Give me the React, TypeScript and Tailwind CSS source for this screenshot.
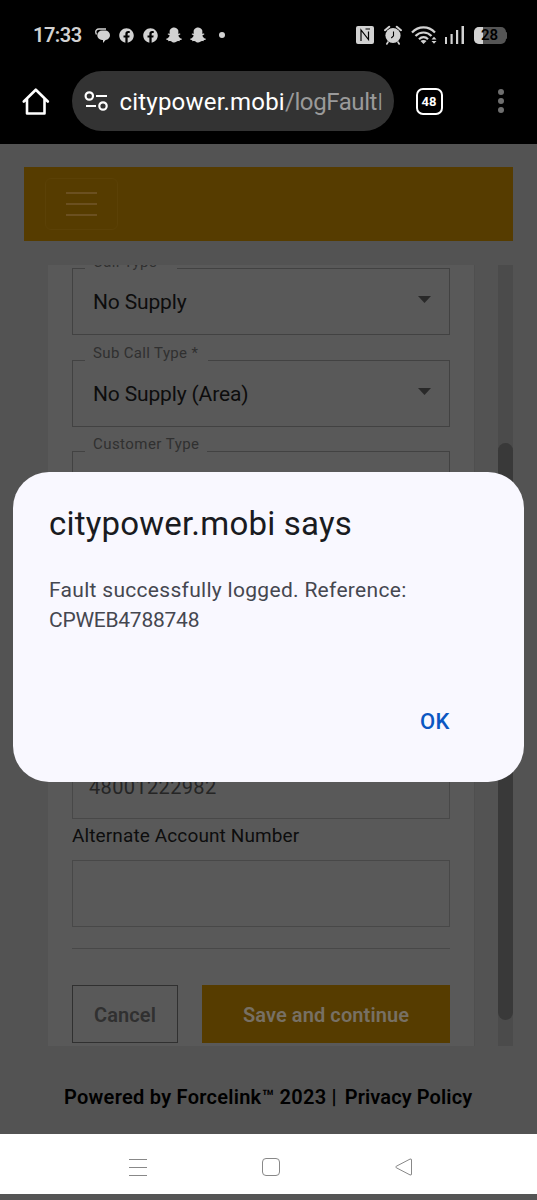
import { FaFacebook, FaSnapchatGhost } from "react-icons/fa";

function StatusBar() {
  return (
    <div className="flex h-[70px] items-center justify-between pl-[33px] pr-[30px] text-[#d2d2d2]">
      <div className="flex items-center">
        <span className="w-[62px] whitespace-nowrap text-[20px] font-semibold leading-none tracking-[-0.5px]">17:33</span>
        <svg className="mt-px h-4 w-4" viewBox="0 0 16 16" fill="currentColor">
          <path d="M7 2.500h3a4.700 4.700 0 0 1 .6 9.400L8 15v-3H7A4.750 4.750 0 0 1 7 2.500z" />
          <path d="M1.500 6.500Q0 3.500 1.500 2 2.300 1 4 1h7" fill="none" stroke="currentColor" strokeWidth="1.400" />
        </svg>
        <FaFacebook className="ml-2 h-[15px] w-[15px]" />
        <FaFacebook className="ml-[9px] h-[15px] w-[15px]" />
        <FaSnapchatGhost className="ml-2 h-4 w-4" />
        <FaSnapchatGhost className="ml-2 h-4 w-4" />
        <span className="ml-[13px] h-1.5 w-1.5 rounded-full bg-current" />
      </div>

      <div className="flex items-center">
        <svg className="h-[18px] w-[18px]" viewBox="0 0 18 18">
          <rect width="18" height="18" rx="2" fill="currentColor" />
          <path d="M5 15V4L12.500 13.500V5.500M9.500 3h4.500" fill="none" stroke="#000" strokeWidth="1.200" />
        </svg>
        <svg className="ml-2.5 h-5 w-[18px]" viewBox="0 0 18 20">
          <circle cx="9" cy="10.500" r="7.600" fill="currentColor" />
          <path d="M1 5.200L5.200 1.700M17 5.200L12.800 1.700" stroke="currentColor" strokeWidth="2" strokeLinecap="round" />
          <path d="M4 17L2.800 19M14 17l1.200 2" stroke="currentColor" strokeWidth="1.600" strokeLinecap="round" />
          <path d="M9.500 6.500v4.300L7.300 13" fill="none" stroke="#000" strokeWidth="1.100" />
        </svg>
        <svg className="ml-[9px] h-5 w-[27px]" viewBox="0 0 27 20" fill="none" stroke="currentColor" strokeWidth="2.200">
          <path d="M1 7.500C7.500.700 17.500.700 24 7.500" />
          <path d="M4.500 11c4.500-4.700 11.500-4.700 16 0" />
          <path d="M8 14.200c2.800-2.700 6.400-2.700 9 0" />
          <path d="M9.500 16L12.500 19l3-3c-1.500-1.500-4.500-1.500-6 0z" fill="currentColor" stroke="none" />
          <path d="M20.500 14.500L23 11.800l2.500 2.700zM20.500 16L23 18.800l2.500-2.800z" fill="currentColor" stroke="none" />
        </svg>
        <svg className="ml-[7px] h-[18px] w-[19px]" viewBox="0 0 19 18" fill="currentColor">
          <rect y="11" width="2" height="7" />
          <rect x="5.500" y="8" width="2.200" height="10" />
          <rect x="11" y="4" width="2.200" height="14" />
          <rect x="16.500" width="2.500" height="18" />
        </svg>
        <div className="relative ml-2.5 flex h-[17px] w-8 items-center justify-center overflow-hidden rounded-[5px] bg-[#555]">
          <span className="absolute inset-y-0 left-0 w-[9px] bg-[#d2d2d2]" />
          <span className="relative text-[15px] font-semibold leading-none text-black">28</span>
        </div>
        <span className="h-[7px] w-[1.5px] rounded-r bg-[#555]" />
      </div>
    </div>
  );
}

function AddressBar() {
  return (
    <div className="flex h-[74px] items-start pl-[22px] pt-[1px] text-white">
      <svg className="mt-[17px] h-[28px] w-[28px]" viewBox="0 0 28 28" fill="none" stroke="currentColor" strokeWidth="2.600" strokeLinejoin="round" strokeLinecap="round">
        <path d="M1.800 13.500L13.800 1.700l12 11.800M5 11v14.500h17.500V11" />
      </svg>
      <div className="ml-[21.500px] flex h-[60px] w-[322px] items-center rounded-full bg-[#333] pl-3">
        <svg className="h-5 w-6" viewBox="0 0 24 20" fill="none" stroke="currentColor" strokeWidth="2.200">
          <circle cx="5.300" cy="5" r="3.700" />
          <path d="M12 5h11M2 15h10" />
          <circle cx="19" cy="15" r="3.700" />
        </svg>
        <span className="ml-3 w-[264px] whitespace-nowrap pt-px text-[24px] leading-[34px] tracking-[0.2px]">
          citypower.mobi<span className="tracking-[-0.4px] text-[#9a9a9a]">/logFault<span className="font-light">I</span></span>
        </span>
      </div>
      <div className="ml-[22px] mt-[17px] flex h-[27px] w-[27px] items-center justify-center rounded-[7px] border-[2.5px] border-white text-[13px] font-bold">
        48
      </div>
      <div className="ml-[55px] mt-[18px] flex flex-col gap-[3px]">
        <span className="h-1.5 w-1.5 rounded-full bg-[#6e6e6e]" />
        <span className="h-1.5 w-1.5 rounded-full bg-[#6e6e6e]" />
        <span className="h-1.5 w-1.5 rounded-full bg-[#6e6e6e]" />
      </div>
    </div>
  );
}

function SelectField({ label, labelClass, value, className }: { label: string; labelClass: string; value?: string; className: string }) {
  return (
    <div className={`relative flex h-[67px] shrink-0 items-center justify-between border border-[#424242] pl-5 pr-[18px] ${className}`}>
      <span className={`absolute -top-[18px] left-3 bg-[#595959] pl-2 text-[15px] leading-5 text-[#303030] ${labelClass}`}>{label}</span>
      <span className="pt-0.5 text-[21px] tracking-[-0.15px] text-[#0d0d0d]">{value}</span>
      {value && (
        <svg className="mb-1 h-[7px] w-[13px] text-[#292929]" viewBox="0 0 13 7" fill="currentColor">
          <path d="M0 0h13L6.500 7z" />
        </svg>
      )}
    </div>
  );
}

function FaultForm() {
  return (
    <div className="flex h-[781px] w-[427px] flex-col overflow-hidden border-r border-[#4f4f4f] bg-[#595959] pl-6 pr-6">
      <SelectField className="mt-[3px]" label="Call Type" labelClass="mt-px w-[92px] tracking-[0.4px]" value="No Supply" />
      <SelectField className="mt-[25px]" label="Sub Call Type *" labelClass="w-[123px] tracking-[0.35px]" value="No Supply (Area)" />
      <SelectField className="mt-6" label="Customer Type" labelClass="w-[122px] tracking-[0.45px]" />

      <div className="mt-[234px] flex h-[67px] shrink-0 items-center border border-[#484848] pl-4 pt-0.5 text-[20px] tracking-[0.35px] text-[#252525]">
        48001222982
      </div>
      <label className="mt-[5px] h-6 whitespace-nowrap text-[19px] leading-6 tracking-[0.12px] text-[#0d0d0d]">Alternate Account Number</label>
      <div className="mt-3 h-[67px] shrink-0 border border-[#484848]" />
      <hr className="mt-[21px] border-[#484848]" />

      <div className="mt-9 flex h-[58px] shrink-0 gap-6 text-[20px] font-semibold tracking-[0.1px]">
        <button className="w-[106px] border border-[#303030] pt-0.5 text-[#303030]">Cancel</button>
        <button className="flex-1 bg-[#563c00] pt-0.5 text-[#777064]">Save and continue</button>
      </div>
    </div>
  );
}

function AlertDialog() {
  return (
    <div className="absolute left-[13px] top-[472px] flex h-[310px] w-[511px] flex-col rounded-[36px] bg-[#f9f8ff] px-9 pt-8">
      <h1 className="whitespace-nowrap text-[33px] leading-10 tracking-[0.2px] text-[#191b21]">citypower.mobi says</h1>
      <p className="mt-[31px] flex flex-col whitespace-nowrap text-[21px] leading-[30px] text-[#454750]">
        <span className="tracking-[0.3px]">Fault successfully logged. Reference:</span>
        <span className="tracking-[-0.25px]">CPWEB4788748</span>
      </p>
      <button className="mr-[38px] mt-[72px] self-end text-[22px] font-medium leading-[30px] tracking-[0.5px] text-[#0b57c2]">OK</button>
    </div>
  );
}

export default function App() {
  return (
    <div className="relative flex h-[1200px] w-[537px] flex-col overflow-hidden bg-black font-['Roboto',sans-serif]">
      <StatusBar />
      <AddressBar />

      <main className="flex h-[990px] flex-col bg-[#535353]">
        <div className="ml-6 mt-[23px] flex h-[74px] w-[489px] shrink-0 items-center bg-[#563c00] pl-[21px]">
          <div className="flex h-[52px] w-[73px] flex-col items-center justify-center gap-[9px] rounded-[6px] border border-[#5b4106]">
            <span className="h-[2px] w-[31px] bg-[#6b5020]" />
            <span className="h-[2px] w-[31px] bg-[#6b5020]" />
            <span className="h-[2px] w-[31px] bg-[#6b5020]" />
          </div>
        </div>

        <div className="ml-12 mt-6 flex">
          <FaultForm />
          <div className="ml-[23px] h-[781px] w-[15px] bg-[#4b4b4b] pt-[178px]">
            <div className="h-[577px] rounded-full bg-[#393939]" />
          </div>
        </div>

        <footer className="ml-16 mt-9 flex gap-2 whitespace-nowrap text-[20px] font-semibold leading-[30px] text-black">
          <span className="tracking-[0.27px]">Powered by Forcelink™ 2023 |</span>
          <span className="tracking-[0.1px]">Privacy Policy</span>
        </footer>
      </main>

      <nav className="flex h-[60px] items-center bg-white pl-[129px] pt-1.5 text-[#888]">
        <div className="flex w-[18px] flex-col gap-[7px]">
          <span className="h-px bg-current" />
          <span className="h-px bg-current" />
          <span className="h-px bg-current" />
        </div>
        <span className="ml-[115px] h-[18px] w-[18px] rounded-[4px] border border-current" />
        <svg className="ml-[115px] h-[18px] w-[18px]" viewBox="0 0 18 18" fill="none" stroke="currentColor" strokeLinejoin="round">
          <path d="M1.200 8.300L15 1.100Q16.500.500 16.500 2v14q0 1.500-1.500.900L1.200 9.700Q0 9 1.200 8.300z" />
        </svg>
      </nav>
      <div className="h-1.5 bg-[#555]" />

      <AlertDialog />
    </div>
  );
}
